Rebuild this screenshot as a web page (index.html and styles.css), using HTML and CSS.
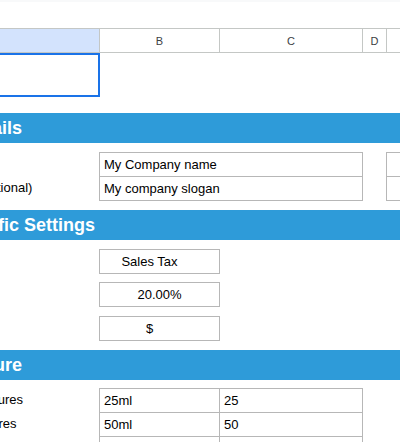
FILE: index.html
```html
<!DOCTYPE html>
<html lang="en">
<head>
<meta charset="UTF-8">
<meta name="viewport" content="width=device-width, initial-scale=1.0">
<title>Price List Setup</title>
<link rel="stylesheet" href="styles.css">
</head>
<body>
<div class="topbar"></div>

<div class="sheet">
    <!-- column letters -->
    <div class="row col-heads">
        <div class="col-head selected">A</div>
        <div class="col-head">B</div>
        <div class="col-head">C</div>
        <div class="col-head">D</div>
        <div class="col-head">E</div>
    </div>

    <!-- first row, active cell -->
    <div class="row first-row">
        <div class="active-cell"></div>
    </div>

    <div class="band band-details">Company Details</div>

    <div class="row">
        <div class="label">Company name</div>
        <div class="cell wide">My Company name</div>
        <div></div>
        <div class="cell"></div>
    </div>
    <div class="row">
        <div class="label">Company slogan (optional)</div>
        <div class="cell wide">My company slogan</div>
        <div></div>
        <div class="cell"></div>
    </div>

    <div class="band band-settings">Country Specific Settings</div>

    <div class="row single tax-row">
        <div class="label">Tax name</div>
        <div class="cell center dropdown">Sales Tax</div>
    </div>
    <div class="row single rate-row">
        <div class="label">Tax rate</div>
        <div class="cell center">20.00%</div>
    </div>
    <div class="row single currency-row">
        <div class="label">Currency symbol</div>
        <div class="cell center dropdown">$</div>
    </div>

    <div class="band band-structure">Pricing Structure</div>

    <div class="row">
        <div class="label">Spirit and wine measures</div>
        <div class="cell">25ml</div>
        <div class="cell">25</div>
    </div>
    <div class="row">
        <div class="label">Draught lager measures</div>
        <div class="cell">50ml</div>
        <div class="cell">50</div>
    </div>
    <div class="row">
        <div class="label"></div>
        <div class="cell"></div>
        <div class="cell"></div>
    </div>
</div>
</body>
</html>
```

FILE: styles.css
```css
body {
  margin: 0;
  overflow: hidden;
  font-family: "Liberation Sans", Arial, sans-serif;
  font-size: 13px;
  color: #000;
  background: #fff;
}
.topbar {
  height: 28px;
  box-sizing: border-box;
  border-top: 2px solid #f8f9fa;
}
.sheet {
  margin-left: -126px;
  width: 640px;
}
.row {
  display: grid;
  grid-template-columns: 225px 120px 143px 24px 100px;
  height: 24px;
}

/* column letters */
.col-heads {
  height: 25px;
  box-sizing: border-box;
  border-top: 1px solid #c4c7c5;
  border-bottom: 1px solid #c4c7c5;
}
.col-head {
  border-left: 1px solid #c4c7c5;
  font-size: 11px;
  color: #3c4043;
  display: flex;
  align-items: center;
  justify-content: center;
}
.col-head:first-child {
  border-left: none;
}
.col-head.selected {
  background: #d3e3fd;
}

.first-row {
  height: 44px;
}
.active-cell {
  height: 44px;
  margin-right: -1px;
  box-sizing: border-box;
  border: 2px solid #1a73e8;
}

/* blue section bars */
.band {
  height: 30px;
  background: #2e9bd9;
  color: #fff;
  font-weight: 700;
  font-size: 18px;
  line-height: 30px;
  padding-left: 2px;
}
.band-details {
  margin-top: 16px;
  margin-bottom: 9px;
}
.band-settings {
  margin-top: 10px;
}
.band-structure {
  margin-top: 9px;
  margin-bottom: 8px;
}

.label {
  padding-left: 3px;
  line-height: 24px;
  white-space: nowrap;
}
.cell {
  height: 25px;
  margin-right: -1px;
  box-sizing: border-box;
  border: 1px solid #b7b7b7;
  padding-left: 4px;
  line-height: 23px;
  white-space: nowrap;
  overflow: hidden;
}
.cell.wide {
  grid-column: span 2;
}
.cell.center {
  text-align: center;
  padding-left: 0;
}
.cell.dropdown {
  padding-right: 20px;
}

.single {
  height: 25px;
}
.tax-row {
  margin-top: 9px;
}
.rate-row {
  margin-top: 8px;
}
.currency-row {
  margin-top: 9px;
}
```
